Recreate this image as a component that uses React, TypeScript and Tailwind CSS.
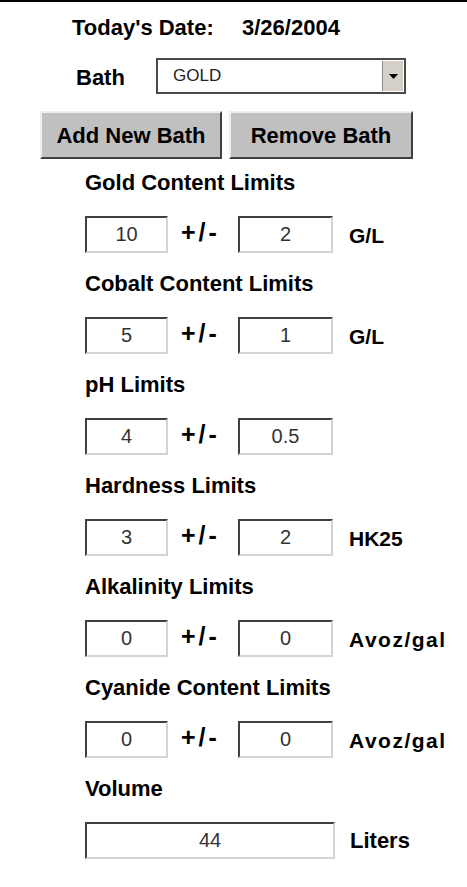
import React from "react";

const font = "font-['Liberation_Sans',Arial,Helvetica,sans-serif]";

type Limit = {
  label: string;
  value: string;
  tolerance: string;
  unit: string;
  spaced?: boolean;
};

const limits: Limit[] = [
  { label: "Gold Content Limits", value: "10", tolerance: "2", unit: "G/L" },
  { label: "Cobalt Content Limits", value: "5", tolerance: "1", unit: "G/L" },
  { label: "pH Limits", value: "4", tolerance: "0.5", unit: "" },
  { label: "Hardness Limits", value: "3", tolerance: "2", unit: "HK25" },
  { label: "Alkalinity Limits", value: "0", tolerance: "0", unit: "Avoz/gal", spaced: true },
  { label: "Cyanide Content Limits", value: "0", tolerance: "0", unit: "Avoz/gal", spaced: true },
];

function Field({ value, width }: { value: string; width: string }) {
  return (
    <input
      readOnly
      value={value}
      className={`${width} h-[37px] shrink-0 bg-white text-center text-[20px] text-[#333] outline-none border-t-2 border-l-2 border-b-2 border-r-2 border-t-[#404040] border-l-[#404040] border-b-[#d6d3ce] border-r-[#d6d3ce] ${font}`}
    />
  );
}

function LimitRow({ label, value, tolerance, unit, spaced }: Limit) {
  return (
    <section className="flex flex-col">
      <h2 className="h-[24px] text-[22px] leading-[24px] font-bold text-black">{label}</h2>
      <div className="mt-[21px] flex items-center">
        <Field value={value} width="w-[83px]" />
        <span className="ml-[13px] -mt-[6px] w-[43px] text-[25px] leading-[24px] font-bold tracking-[3px] text-black">
          +/-
        </span>
        <span className="ml-[14px]">
          <Field value={tolerance} width="w-[95px]" />
        </span>
        {unit && (
          <span
            className={`ml-[16px] mt-[2px] text-[21px] leading-[24px] font-bold text-black ${spaced ? "tracking-[1.5px]" : ""}`}
          >
            {unit}
          </span>
        )}
      </div>
    </section>
  );
}

export default function App() {
  return (
    <div className={`w-[467px] h-[887px] bg-white border-t-2 border-black ${font}`}>
      <div className="pt-[14px] pl-[72px] flex text-[22px] leading-[24px] font-bold text-black">
        <span className="w-[170px]">Today's Date:</span>
        <span>3/26/2004</span>
      </div>

      <div className="mt-[18px] pl-[76px] flex items-start">
        <span className="mt-[8px] w-[80px] text-[22px] leading-[24px] font-bold text-black">Bath</span>
        <div className="w-[250px] h-[36px] flex items-stretch border-2 border-[#4a4a4a] bg-white">
          <span className="flex-1 pl-[15px] text-[17px] leading-[32px] text-[#222]">GOLD</span>
          <span className="my-[1px] mr-[1px] w-[21px] flex items-center justify-center bg-[#d4d0c8] border-l border-[#8a8a8a]">
            <svg width="9" height="5" viewBox="0 0 9 5">
              <path d="M0 0h9L4.5 5z" fill="#000" />
            </svg>
          </span>
        </div>
      </div>

      <div className="mt-[17px] pl-[40px] flex gap-[7px]">
        <button className="w-[182px] h-[48px] bg-[#c0c0c0] border-2 border-t-[#eeeeee] border-l-[#eeeeee] border-b-[#404040] border-r-[#404040] text-[22px] font-bold text-black">
          Add New Bath
        </button>
        <button className="w-[184px] h-[48px] bg-[#c0c0c0] border-2 border-t-[#eeeeee] border-l-[#eeeeee] border-b-[#404040] border-r-[#404040] text-[22px] font-bold text-black">
          Remove Bath
        </button>
      </div>

      <div className="mt-[12px] pl-[85px] flex flex-col gap-[19px]">
        {limits.map((l) => (
          <LimitRow key={l.label} {...l} />
        ))}
        <section className="flex flex-col">
          <h2 className="h-[24px] text-[22px] leading-[24px] font-bold text-black">Volume</h2>
          <div className="mt-[21px] flex items-center">
            <Field value="44" width="w-[250px]" />
            <span className="ml-[15px] text-[22px] leading-[24px] font-bold text-black">Liters</span>
          </div>
        </section>
      </div>
    </div>
  );
}
